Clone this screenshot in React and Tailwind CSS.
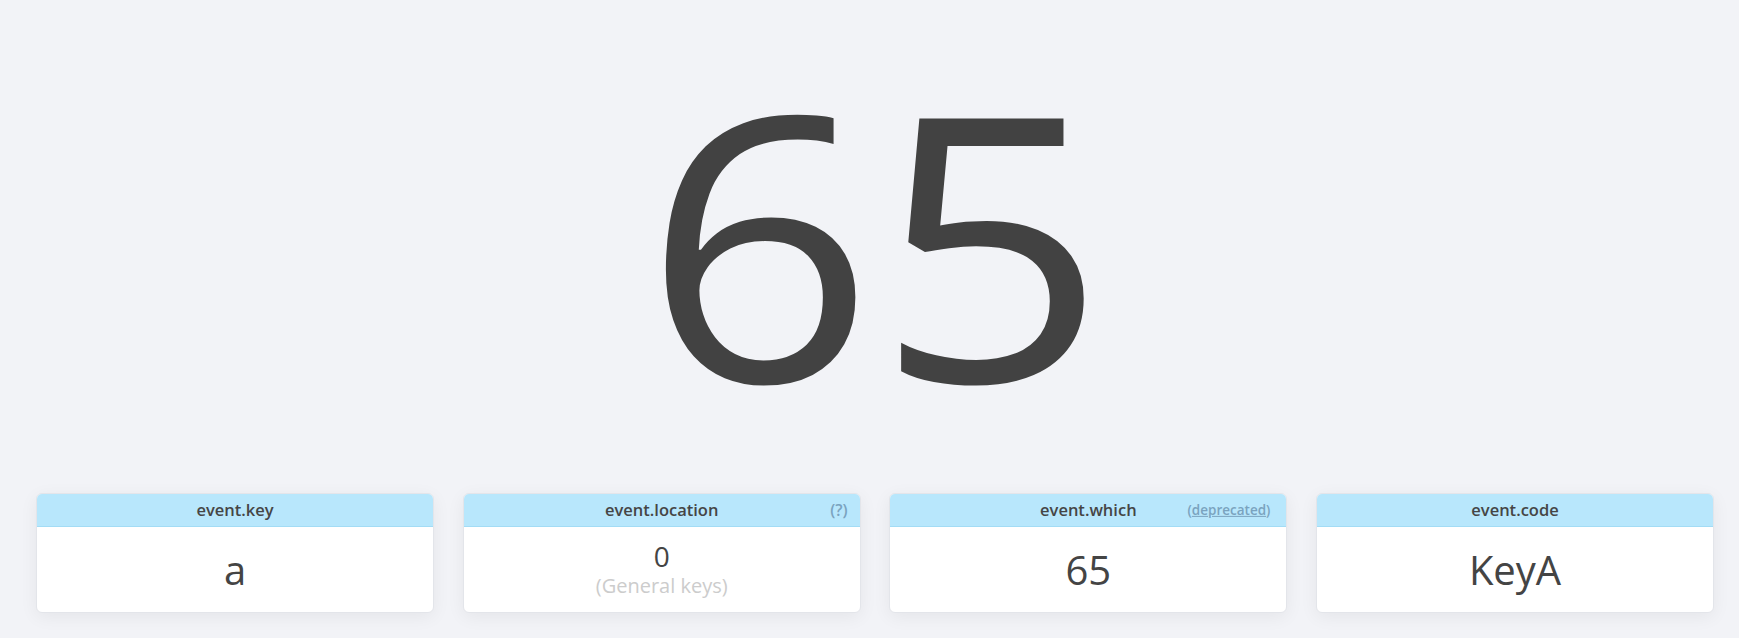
import React from "react";

const cards = [
  { title: "event.key", value: "a" },
  { title: "event.location", value: "0", note: "(General keys)", extra: "help" },
  { title: "event.which", value: "65", extra: "deprecated" },
  { title: "event.code", value: "KeyA" },
];

function Card({ title, value, note, extra }) {
  return (
    <div className="flex-1 h-[120px] rounded-[6px] bg-white border border-[#e3e5ea] shadow-[0_4px_18px_rgba(0,0,0,0.06)] overflow-hidden flex flex-col">
      {/* header */}
      <div className="relative h-[33px] shrink-0 bg-[#b8e7fc] border-b border-[#a3dcf5] flex items-center justify-center">
        <span className="text-[16.5px] font-semibold text-[#454545] leading-none">{title}</span>
        {extra === "help" && (
          <span className="absolute right-[12px] top-1/2 -translate-y-1/2 text-[16px] font-semibold text-[#7aa3bf]">(?)</span>
        )}
        {extra === "deprecated" && (
          <span className="absolute right-[16px] top-1/2 -translate-y-1/2 text-[13.5px] font-semibold text-[#7aa3bf]">
            (<span className="underline">deprecated</span>)
          </span>
        )}
      </div>
      {/* body */}
      <div className="flex-1 flex flex-col items-center justify-center text-[#444444]">
        {note ? (
          <>
            <span className="text-[28px] leading-[28px]">{value}</span>
            <span className="text-[20px] leading-[24px] mt-[4px] text-[#cccccc]">{note}</span>
          </>
        ) : (
          <span className="text-[40px] leading-none">{value}</span>
        )}
      </div>
    </div>
  );
}

export default function App() {
  return (
    <div
      className="h-[638px] w-full bg-[#f2f3f7] flex flex-col overflow-hidden"
      style={{ fontFamily: '"Open Sans", "Noto Sans", sans-serif' }}
    >
      {/* Big key code */}
      <div className="flex-1 flex items-center justify-center pl-[11px] pb-[14px]">
        <span className="text-[369px] leading-[1.2] text-[#424242] font-normal scale-x-110">65</span>
      </div>

      {/* Event cards */}
      <div className="flex gap-[28.67px] pl-[36px] pr-[25px] pb-[25px]">
        {cards.map((c) => (
          <Card key={c.title} {...c} />
        ))}
      </div>
    </div>
  );
}
